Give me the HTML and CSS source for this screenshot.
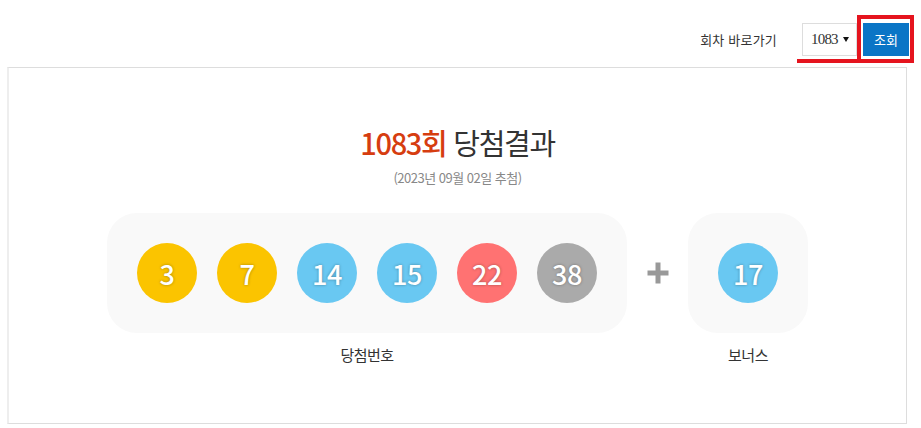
FILE: index.html
```html
<!DOCTYPE html>
<html lang="ko">
<head>
<meta charset="utf-8">
<title>1083회 당첨결과</title>
<link rel="stylesheet" href="styles.css">
</head>
<body>
<div class="topbar">
  <span class="top-label">회차 바로가기</span>
  <div class="select">1083<span class="caret"></span></div>
  <button class="btn">조회</button>
  <span class="mark-box"></span>
  <span class="mark-line"></span>
</div>
<div class="result">
  <h2 class="title"><strong>1083회</strong> 당첨결과</h2>
  <p class="date">(2023년 09월 02일 추첨)</p>
  <div class="nums">
    <div class="col">
      <div class="panel">
        <span class="ball yellow">3</span>
        <span class="ball yellow">7</span>
        <span class="ball blue">14</span>
        <span class="ball blue">15</span>
        <span class="ball red">22</span>
        <span class="ball gray">38</span>
      </div>
      <p class="cap">당첨번호</p>
    </div>
    <div class="plus"></div>
    <div class="col">
      <div class="panel">
        <span class="ball blue">17</span>
      </div>
      <p class="cap">보너스</p>
    </div>
  </div>
</div>
</body>
</html>
```
FILE: styles.css
```css
* { box-sizing: border-box; }
html, body { margin: 0; padding: 0; background: #fff; }
body { font-family: "Noto Sans CJK KR", "Noto Sans", sans-serif; color: #333; }

.topbar {
  position: relative;
  display: flex;
  justify-content: flex-end;
  align-items: center;
  height: 33px;
  margin: 23px 12px 11px 0;
}
.top-label {
  font-size: 13px;
  letter-spacing: 0.2px;
  color: #333;
  margin-right: 25px;
}
.select {
  width: 55px;
  height: 33px;
  border: 1px solid #ddd;
  display: flex;
  align-items: center;
  padding-left: 8px;
  font-family: "Liberation Serif", serif;
  font-size: 15px;
  letter-spacing: -0.8px;
  color: #333;
}
.caret {
  width: 0; height: 0;
  margin-left: 5px;
  border-left: 3.5px solid transparent;
  border-right: 3.5px solid transparent;
  border-top: 5px solid #111;
}
.btn {
  width: 46px;
  height: 33px;
  margin-left: 6px;
  border: 0;
  padding: 0;
  background: #0a75c6;
  color: #fff;
  font-family: "Noto Sans CJK KR", sans-serif;
  font-size: 13px;
}
.mark-box {
  position: absolute;
  right: -5px;
  top: -8px;
  width: 57px;
  height: 48px;
  border: 4px solid #e5141e;
}
.mark-line {
  position: absolute;
  right: 52px;
  top: 36px;
  width: 60px;
  height: 4px;
  background: #e5141e;
}

.result {
  margin: 0 14px 0 7px;
  height: 357px;
  border: 1px solid #ddd;
  border-left: 2px solid #eee;
  padding-top: 53px;
  text-align: center;
}
.title {
  margin: 0;
  font-size: 29px;
  line-height: 42px;
  font-weight: 400;
  letter-spacing: -1.3px;
  color: #333;
}
.title strong { color: #d63d10; font-weight: 500; }
.date {
  margin: 6px 0 0;
  font-size: 13px;
  line-height: 18px;
  letter-spacing: -0.5px;
  color: #888;
}
.nums {
  display: flex;
  justify-content: center;
  align-items: flex-start;
  margin-top: 26px;
}
.col { display: flex; flex-direction: column; align-items: center; }
.panel {
  display: flex;
  gap: 20px;
  padding: 30px;
  height: 120px;
  background: #f9f9f9;
  border-radius: 30px;
}
.ball {
  width: 60px;
  height: 60px;
  border-radius: 50%;
  display: flex;
  align-items: center;
  justify-content: center;
  color: #fff;
  font-size: 27px;
  font-weight: 500;
  letter-spacing: -0.5px;
  text-shadow: 0 0 3px rgba(0,0,0,0.35);
}
.yellow { background: #fbc400; }
.blue { background: #69c8f2; }
.red { background: #ff7272; }
.gray { background: #aaa; }
.plus {
  position: relative;
  width: 61px;
  height: 120px;
}
.plus::before, .plus::after {
  content: "";
  position: absolute;
  background: #999;
  left: 50%;
  top: 50%;
  transform: translate(-50%, -50%);
}
.plus::before { width: 21px; height: 5px; }
.plus::after { width: 5px; height: 21px; }
.cap {
  margin: 12px 0 0;
  font-size: 15px;
  line-height: 20px;
  letter-spacing: -0.5px;
  color: #333;
}
```
